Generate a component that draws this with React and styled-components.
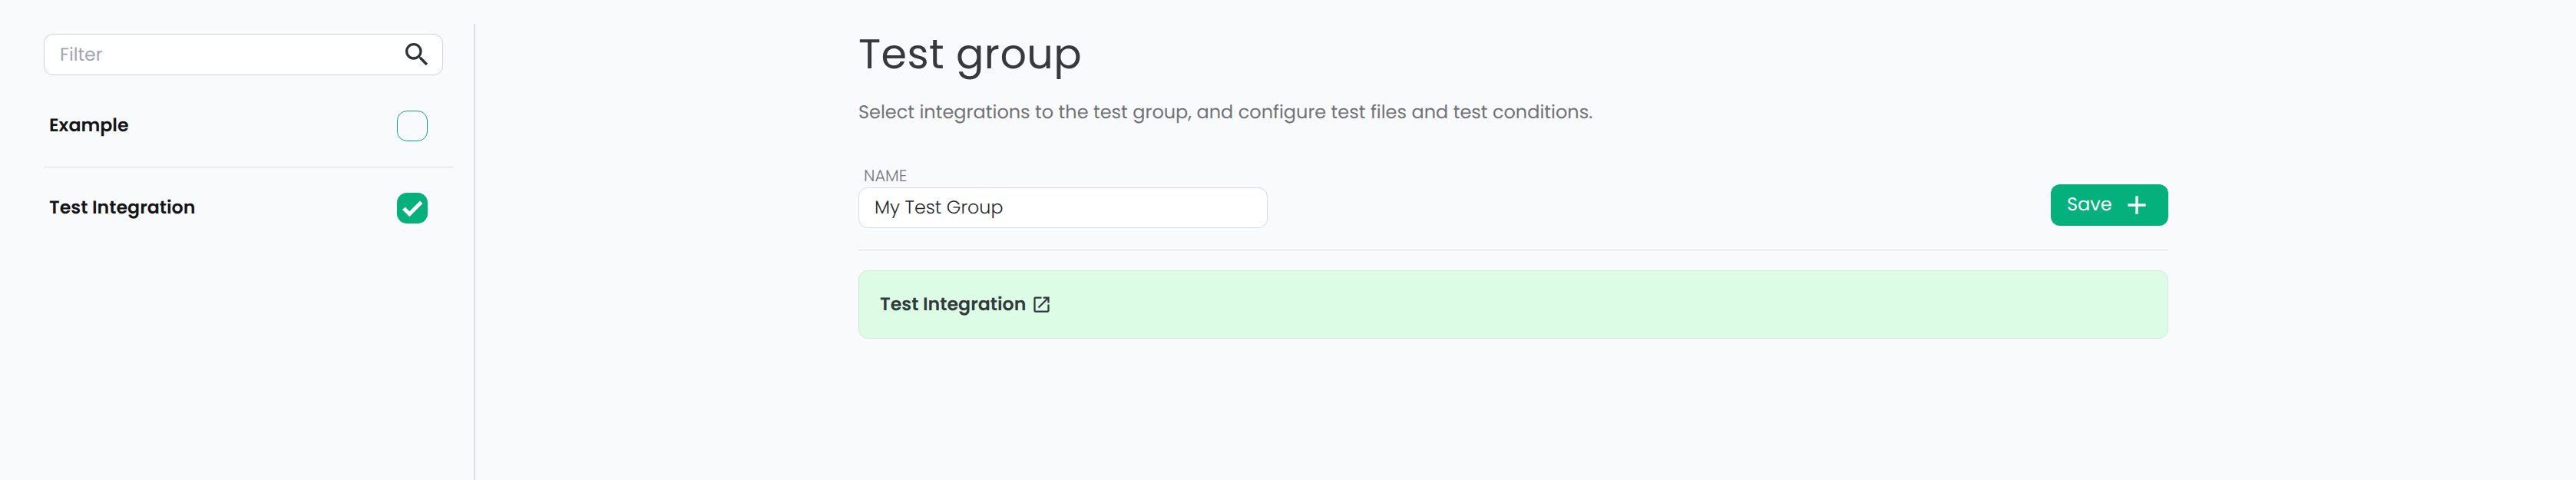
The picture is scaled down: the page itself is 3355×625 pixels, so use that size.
import React, { useState } from "react";
import styled, { createGlobalStyle } from "styled-components";
import { MdSearch, MdAdd, MdOpenInNew } from "react-icons/md";

const GlobalStyle = createGlobalStyle`
  *, *::before, *::after { box-sizing: border-box; }
  body {
    margin: 0;
    background: #f9fafc;
    color: #373a3d;
    font-family: Poppins, Inter, "Liberation Sans", sans-serif;
    font-size: 24px;
    text-rendering: geometricPrecision;
  }
  input, button { text-rendering: inherit; }
`;

const Page = styled.div`
  display: flex;
  height: 625px;
  overflow: hidden;
`;

const Sidebar = styled.aside`
  flex: none;
  width: 619px;
  margin-top: 31px;
  padding: 13px 27px 0 57px;
  border-right: 2px solid #dcdee2;
`;

const SearchField = styled.label`
  display: flex;
  align-items: center;
  justify-content: space-between;
  width: 520px;
  height: 54px;
  margin-bottom: 13px;
  padding: 0 13px 0 20px;
  background: #fff;
  border: 1px solid #cfd2d6;
  border-radius: 12px;
`;

const SearchInput = styled.input`
  flex: 1;
  min-width: 0;
  padding: 0;
  border: 0;
  outline: 0;
  background: none;
  font: inherit;
  font-size: 23.6px;
  color: inherit;
  &::placeholder { color: #a0a5af; opacity: 1; }
`;

const List = styled.ul`
  margin: 0;
  padding: 0;
  list-style: none;
`;

const ListItem = styled.li`
  display: flex;
  align-items: center;
  justify-content: space-between;
  height: 106px;
  padding: 0 33px 0 7px;
  & + & {
    height: 107px;
    border-top: 1px solid #dcdee2;
  }
`;

const ItemName = styled.span`
  padding-bottom: 2px;
  color: #141516;
  font-size: 23.7px;
  font-weight: 600;
`;

const CheckBox = styled.button`
  flex: none;
  display: flex;
  width: 40px;
  height: 40px;
  padding: 0;
  border: ${(p) => (p.$on ? "0" : "1px solid #12a87c")};
  border-radius: 13px;
  background: ${(p) => (p.$on ? "#04b07b" : "transparent")};
`;

const Main = styled.main`
  width: 1706px;
  margin-left: 499px;
  padding-top: 40px;
`;

const Title = styled.h1`
  margin: 0 0 30px;
  font-size: 54px;
  font-weight: 400;
  line-height: 60px;
  letter-spacing: 0.4px;
`;

const Description = styled.p`
  margin: 0 0 51px;
  line-height: 34px;
  color: #717375;
`;

const FormRow = styled.div`
  display: flex;
  align-items: flex-end;
  justify-content: space-between;
  height: 111px;
  padding-bottom: 28px;
  border-bottom: 1px solid #dcdee2;
`;

const Field = styled.label`
  display: block;
  width: 533px;
`;

const FieldLabel = styled.span`
  display: block;
  padding-left: 7px;
  font-size: 21px;
  font-weight: 300;
  line-height: 28px;
  color: #77797c;
`;

const TextInput = styled.input`
  display: block;
  width: 100%;
  height: 53px;
  padding: 0 20px;
  background: #fff;
  border: 1px solid #d8dade;
  border-radius: 12px;
  outline: 0;
  font: inherit;
  font-size: 23.8px;
  font-weight: 300;
  color: #26292c;
`;

const SaveButton = styled.button`
  display: flex;
  align-items: center;
  justify-content: space-between;
  width: 153px;
  height: 54px;
  margin-bottom: 3px;
  padding: 0 21px;
  border: 0;
  border-radius: 12px;
  background: #04b07b;
  color: #fff;
  font: inherit;
`;

const SaveLabel = styled.span`
  padding-bottom: 1px;
`;

const IntegrationCard = styled.section`
  display: flex;
  align-items: center;
  gap: 7px;
  height: 89px;
  margin-top: 26px;
  padding: 0 27px;
  background: #dcfce5;
  border: 1px solid #d6e8dc;
  border-radius: 12px;
`;

const CardTitle = styled.span`
  padding-bottom: 1px;
  font-size: 23.7px;
  font-weight: 600;
  color: #30393c;
`;

const CheckMark = () => (
  <svg width="40" height="40" viewBox="0 0 40 40" aria-hidden="true">
    <path d="M7 22L10.8 18.4L16.3 24.2L30 10.5L33.4 14L16.3 31.3Z" fill="#fff" />
  </svg>
);

const integrations = ["Example", "Test Integration"];

export default function App() {
  const [selected, setSelected] = useState(["Test Integration"]);
  const toggle = (name) =>
    setSelected((s) => (s.includes(name) ? s.filter((n) => n !== name) : [...s, name]));

  return (
    <>
      <GlobalStyle />
      <Page>
        <Sidebar>
          <SearchField>
            <SearchInput placeholder="Filter" />
            <MdSearch size={40} color="#2f3235" />
          </SearchField>
          <List>
            {integrations.map((name) => {
              const on = selected.includes(name);
              return (
                <ListItem key={name}>
                  <ItemName>{name}</ItemName>
                  <CheckBox
                    role="checkbox"
                    aria-checked={on}
                    aria-label={name}
                    $on={on}
                    onClick={() => toggle(name)}
                  >
                    {on && <CheckMark />}
                  </CheckBox>
                </ListItem>
              );
            })}
          </List>
        </Sidebar>
        <Main>
          <Title>Test group</Title>
          <Description>
            Select integrations to the test group, and configure test files and test conditions.
          </Description>
          <FormRow>
            <Field>
              <FieldLabel>NAME</FieldLabel>
              <TextInput defaultValue="My Test Group" />
            </Field>
            <SaveButton>
              <SaveLabel>Save</SaveLabel>
              <MdAdd size={40} />
            </SaveButton>
          </FormRow>
          {selected.map((name) => (
            <IntegrationCard key={name}>
              <CardTitle>{name}</CardTitle>
              <MdOpenInNew size={27} color="#30393c" />
            </IntegrationCard>
          ))}
        </Main>
      </Page>
    </>
  );
}
